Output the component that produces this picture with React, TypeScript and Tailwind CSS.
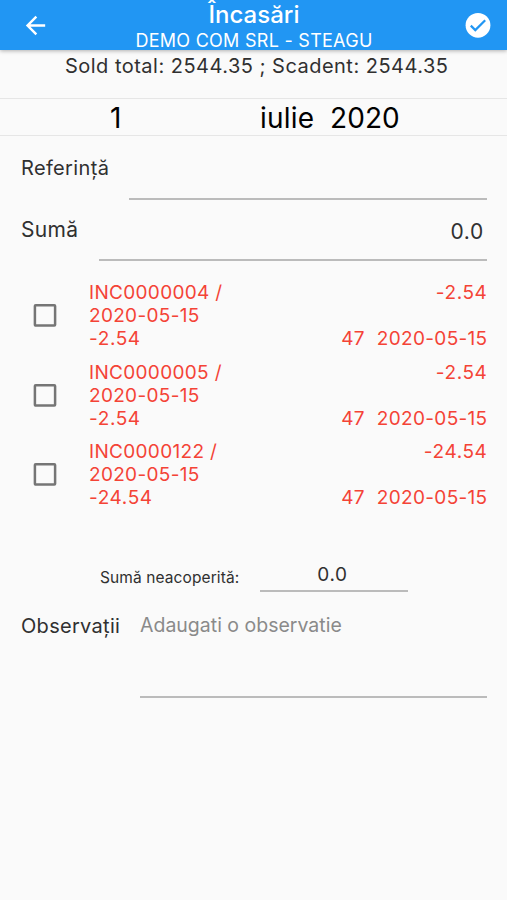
type Invoice = {
  code: string;
  date: string;
  amount: string;
  days: string;
};

const invoices: Invoice[] = [
  { code: 'INC0000004 /', date: '2020-05-15', amount: '-2.54', days: '47' },
  { code: 'INC0000005 /', date: '2020-05-15', amount: '-2.54', days: '47' },
  { code: 'INC0000122 /', date: '2020-05-15', amount: '-24.54', days: '47' },
];

function BackIcon() {
  return (
    <svg viewBox="0 0 24 24" className="size-[29px]" fill="currentColor">
      <path d="M20 11H7.83l5.59-5.59L12 4l-8 8 8 8 1.41-1.41L7.83 13H20v-2z" />
    </svg>
  );
}

function ConfirmIcon() {
  return (
    <svg viewBox="0 0 30 30" className="size-[30px]">
      <circle cx="15" cy="15.3" r="12.4" fill="white" />
      <path d="M7.8 15.6l4.5 4.5L22.2 10.2" fill="none" stroke="#2196f3" strokeWidth="2.2" />
    </svg>
  );
}

function InvoiceRow({ invoice }: { invoice: Invoice }) {
  return (
    <li className="flex h-[79.5px] items-start">
      <svg viewBox="0 0 24 24" className="mt-[22px] ml-[33px] size-[24px] shrink-0">
        <rect x="1.9" y="2.3" width="20.2" height="20.2" rx="0.8" fill="none" stroke="#757575" strokeWidth="2.5" />
      </svg>
      <div className="ml-[32px] flex-1 pr-[19.5px] text-[19px] leading-[23.2px] tracking-[0.32px] text-[#f44336]">
        <div className="flex justify-between">
          <span>{invoice.code}</span>
          <span className="tracking-[0.6px]">{invoice.amount}</span>
        </div>
        <div>{invoice.date}</div>
        <div className="flex justify-between">
          <span className="tracking-[0.6px]">{invoice.amount}</span>
          <span className="flex gap-[12px]">
            <span>{invoice.days}</span>
            <span>{invoice.date}</span>
          </span>
        </div>
      </div>
    </li>
  );
}

export default function App() {
  return (
    <div className="flex h-[900px] w-[507px] flex-col overflow-hidden bg-[#fafafa] font-['Inter',sans-serif] text-[#303030]">
      <header className="flex h-[50px] shrink-0 items-center justify-between bg-[#2196f3] pr-[14px] pl-[21px] text-white shadow-[0_1px_4px_rgba(0,0,0,0.3)]">
        <BackIcon />
        <div className="mr-[5px] self-start pt-[2px] text-center">
          <h1 className="text-[24px] leading-[25px] font-medium">Încasări</h1>
          <p className="text-[18px] leading-[27px] tracking-[0.27px]">DEMO COM SRL - STEAGU</p>
        </div>
        <ConfirmIcon />
      </header>
      <p className="h-[48px] pt-[4px] pl-[65px] text-[20px] leading-[24px] tracking-[0.48px]">Sold total: 2544.35 ; Scadent: 2544.35</p>
      <div className="flex h-[38px] items-center border-y border-[#e6e6e6] pt-[2px] text-[28px] text-black">
        <span className="ml-[110px] w-[150px]">1</span>
        <span className="w-[70px] tracking-[0.2px]">iulie</span>
        <span className="tracking-[0.1px]">2020</span>
      </div>
      <label className="flex h-[64px] items-end px-[20px] text-[20px]">
        <span className="w-[109px] pb-[18px] pl-[1px] leading-[28px] tracking-[0.35px]">Referință</span>
        <span className="flex-1 border-b-2 border-[#bbb]" />
      </label>
      <label className="flex h-[61px] items-end px-[20px] text-[21px]">
        <span className="w-[79px] pb-[17px] pl-[1px] leading-[28px] tracking-[0.3px]">Sumă</span>
        <span className="flex-1 border-b-2 border-[#bbb] pr-[3px] pb-[13px] text-right leading-[28px] tracking-[0.7px]">0.0</span>
      </label>
      <ul className="mt-[20px] h-[238px]">
        {invoices.map((invoice) => (
          <InvoiceRow key={invoice.code} invoice={invoice} />
        ))}
      </ul>
      <div className="mt-[42px] flex h-[31px] items-end pl-[100px]">
        <span className="w-[160px] pb-[4px] text-[15.5px] leading-[20px] tracking-[0.1px]">Sumă neacoperită:</span>
        <span className="w-[148px] border-b-2 border-[#bbb] pr-[3px] pb-[3px] text-center text-[19px] leading-[24px] tracking-[0.7px]">0.0</span>
      </div>
      <div className="mt-[20px] flex h-[86px] px-[20px] text-[20px] leading-[28px]">
        <span className="w-[120px] pl-[1px] tracking-[0.3px]">Observații</span>
        <span className="flex-1 border-b-2 border-[#bbb] text-[19.5px] leading-[26px] text-[#8a8a8a]">Adaugati o observatie</span>
      </div>
    </div>
  );
}
